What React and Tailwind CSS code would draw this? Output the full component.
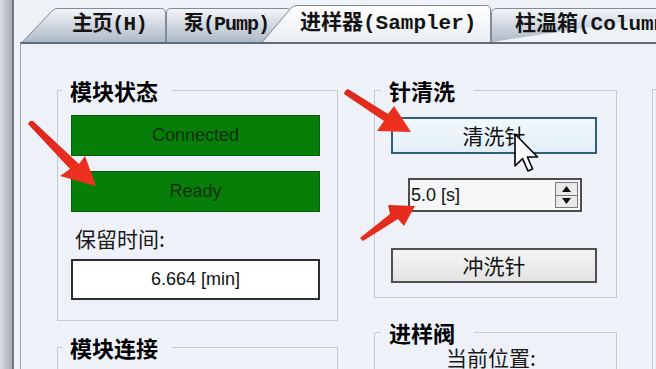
import React from "react";

const tabText =
  "relative flex h-full items-center whitespace-nowrap font-['Liberation_Mono','Noto_Sans_CJK_SC',monospace] font-bold text-[#141414]";
const cjk = "font-['Noto_Sans_CJK_SC',sans-serif]";
const legendCls =
  "font-['Noto_Sans_CJK_SC',sans-serif] text-[22px] font-bold leading-[22px] text-black";

// tab background drawn as a shape
function TabShape({ d, w, h, id, from, to }) {
  return (
    <svg
      className="absolute inset-0 h-full w-full"
      viewBox={`0 0 ${w} ${h}`}
      preserveAspectRatio="none"
    >
      <defs>
        <linearGradient id={id} x1="0" y1="0" x2="0" y2="1">
          <stop offset="0" stopColor={from} />
          <stop offset="1" stopColor={to} />
        </linearGradient>
      </defs>
      <path d={d} fill={`url(#${id})`} stroke="#7f8b98" strokeWidth="1" />
    </svg>
  );
}

function Tabs() {
  return (
    <div className="flex h-[42px] shrink-0 items-end overflow-hidden pl-[8px]">
      <div className="relative h-[34px] w-[144px] shrink-0">
        <TabShape
          id="t1"
          w={144}
          h={34}
          from="#f4f6f9"
          to="#aeb9c7"
          d="M0.5,34 L30,3 Q32.5,0.5 36,0.5 L139,0.5 Q143.5,0.5 143.5,5 L143.5,34"
        />
        <span className={`${tabText} pl-[50px] text-[21px] tracking-[-1px]`}>主页(H)</span>
      </div>
      <div className="relative h-[34px] w-[126px] shrink-0">
        <TabShape
          id="t2"
          w={126}
          h={34}
          from="#f4f6f9"
          to="#aeb9c7"
          d="M0.5,34 L0.5,5 Q0.5,0.5 5,0.5 L120,0.5 Q125.5,0.5 125.5,5 L125.5,34"
        />
        <span className={`${tabText} pl-[18px] text-[20px] tracking-[-1px]`}>泵(Pump)</span>
      </div>
      <div className="relative -ml-[30px] h-[37px] w-[229px] shrink-0">
        <TabShape
          id="t3"
          w={229}
          h={37}
          from="#ffffff"
          to="#e9edf2"
          d="M0.5,37 L29,3 Q31.5,0.5 35,0.5 L224,0.5 Q228.5,0.5 228.5,5 L228.5,37"
        />
        <span className={`${tabText} pl-[38px] text-[21px]`}>进样器(Sampler)</span>
      </div>
      <div className="relative h-[34px] w-[220px] shrink-0">
        <TabShape
          id="t4"
          w={220}
          h={34}
          from="#f4f6f9"
          to="#aeb9c7"
          d="M0.5,34 L0.5,6 Q0.5,0.5 6,0.5 L220,0.5"
        />
        <span className={`${tabText} pl-[24px] text-[21px]`}>柱温箱(Column)</span>
      </div>
    </div>
  );
}

function Group({ title, legendPad, className, children }) {
  return (
    <fieldset className={`border border-[#c4cbd3] ${className}`}>
      <legend className={`${legendCls} ${legendPad}`}>{title}</legend>
      {children}
    </fieldset>
  );
}

function StatusBox({ text, className }) {
  return (
    <div
      className={`flex h-[41px] w-[249px] items-center justify-center border border-[#0b5c0b] bg-[#077e08] font-['Liberation_Sans',sans-serif] text-[18px] text-[#0f300f] ${className}`}
    >
      {text}
    </div>
  );
}

function SpinBox() {
  return (
    <div className="ml-[17px] mt-[24px] flex h-[34px] w-[174px] items-center justify-between border-2 border-[#4d4d4d] bg-[#f4f6f7] pr-[2px]">
      <span className="pl-[1px] font-['Liberation_Sans',sans-serif] text-[18px] text-[#111]">
        5.0 [s]
      </span>
      <div className="flex h-[26px] w-[23px] flex-col border border-[#7a7a7a] bg-[#e9e9e9]">
        <div className="flex flex-1 items-center justify-center border-b border-[#7a7a7a]">
          <svg width="9" height="6" viewBox="0 0 9 6">
            <path d="M0,6 L4.5,0 L9,6 Z" fill="#111" />
          </svg>
        </div>
        <div className="flex flex-1 items-center justify-center">
          <svg width="9" height="6" viewBox="0 0 9 6">
            <path d="M0,0 L4.5,6 L9,0 Z" fill="#111" />
          </svg>
        </div>
      </div>
    </div>
  );
}

function Overlays() {
  return (
    <>
      <svg
        className="pointer-events-none absolute left-0 top-0"
        width="656"
        height="369"
        viewBox="0 0 656 369"
      >
        <defs>
          <linearGradient id="red" x1="0" y1="0" x2="1" y2="1">
            <stop offset="0" stopColor="#d9261c" />
            <stop offset="1" stopColor="#f2321f" />
          </linearGradient>
        </defs>
        <polygon
          points="30,121 33,121 79,164 85,156 96,186 60,176 70,169 28,124"
          fill="url(#red)"
        />
        <polygon
          points="345,91 348,89 388,114 394,106 411,132 377,131 384,121 344,94"
          fill="url(#red)"
        />
        <polygon
          points="360,238 390,214 388,205 415,206 404,226 398,219 363,241"
          fill="url(#red)"
        />
      </svg>
      <svg
        className="pointer-events-none absolute left-[514px] top-[133px]"
        width="26"
        height="40"
        viewBox="0 0 13 20"
      >
        <path
          d="M0.5,0.5 L0.5,16.5 L4.3,12.8 L7,19 L9.3,18 L6.7,12 L11.8,12 Z"
          fill="#fff"
          stroke="#000"
          strokeWidth="0.8"
          strokeLinejoin="round"
        />
      </svg>
    </>
  );
}

export default function App() {
  return (
    <div className="relative flex h-[369px] w-[656px] overflow-hidden bg-[#eef1f6]">
      <div className="w-[14px] shrink-0 border-r-2 border-[#6f767d] bg-linear-to-r from-[#d9dce0] to-[#a8adb3]" />
      <div className="flex min-w-0 flex-1 flex-col">
        <Tabs />
        <div className="ml-[6px] flex flex-1 border-l border-t-2 border-l-[#9aa3ad] border-t-[#5f6b78] bg-[#eef2f8] pl-[36px] pt-[35px]">
          {/* column 1 */}
          <div className="flex w-[281px] shrink-0 flex-col">
            <Group
              title="模块状态"
              legendPad="-ml-[9px] pl-[8px] pr-[14px]"
              className="px-[13px] pb-[20px]"
            >
              <StatusBox text="Connected" className="mt-[14px]" />
              <StatusBox text="Ready" className="mt-[15px]" />
              <div className={`${cjk} mt-[12px] pl-[4px] text-[21px] leading-[28px] text-[#1a1a1a]`}>
                保留时间:
              </div>
              <div className="mt-[7px] flex h-[41px] w-[249px] items-center justify-center border-2 border-[#2e2e2e] bg-white font-['Liberation_Sans',sans-serif] text-[18px] text-[#111]">
                6.664 [min]
              </div>
            </Group>
            <Group
              title="模块连接"
              legendPad="-ml-[9px] pl-[8px] pr-[14px]"
              className="mt-[15px] h-[80px] px-[13px]"
            />
          </div>
          {/* column 2 */}
          <div className="ml-[36px] flex w-[243px] shrink-0 flex-col">
            <Group
              title="针清洗"
              legendPad="-ml-[10px] pl-[8px] pr-[19px]"
              className="px-[16px] pb-[14px]"
            >
              <button className={`${cjk} mt-[16px] flex h-[37px] w-[206px] items-center justify-center border-2 border-[#2f6079] bg-linear-to-b from-[#f3f9fd] to-[#e2eef6] text-[21px] text-[#111]`}>
                清洗针
              </button>
              <SpinBox />
              <button className={`${cjk} mt-[36px] flex h-[35px] w-[206px] items-center justify-center border-2 border-[#505050] bg-linear-to-b from-[#f4f4f4] to-[#e3e3e3] text-[21px] text-[#111]`}>
                冲洗针
              </button>
            </Group>
            <Group
              title="进样阀"
              legendPad="-ml-[10px] pl-[8px] pr-[19px]"
              className="mt-[23px] h-[80px] px-[16px]"
            >
              <div className={`${cjk} mt-[1px] pl-[55px] text-[21px] leading-[26px] text-[#1a1a1a]`}>
                当前位置:
              </div>
            </Group>
          </div>
          {/* column 3 */}
          <div className="ml-[35px] mt-[10px] h-[300px] w-[100px] shrink-0 border-l border-t border-[#c4cbd3]" />
        </div>
      </div>
      <Overlays />
    </div>
  );
}
